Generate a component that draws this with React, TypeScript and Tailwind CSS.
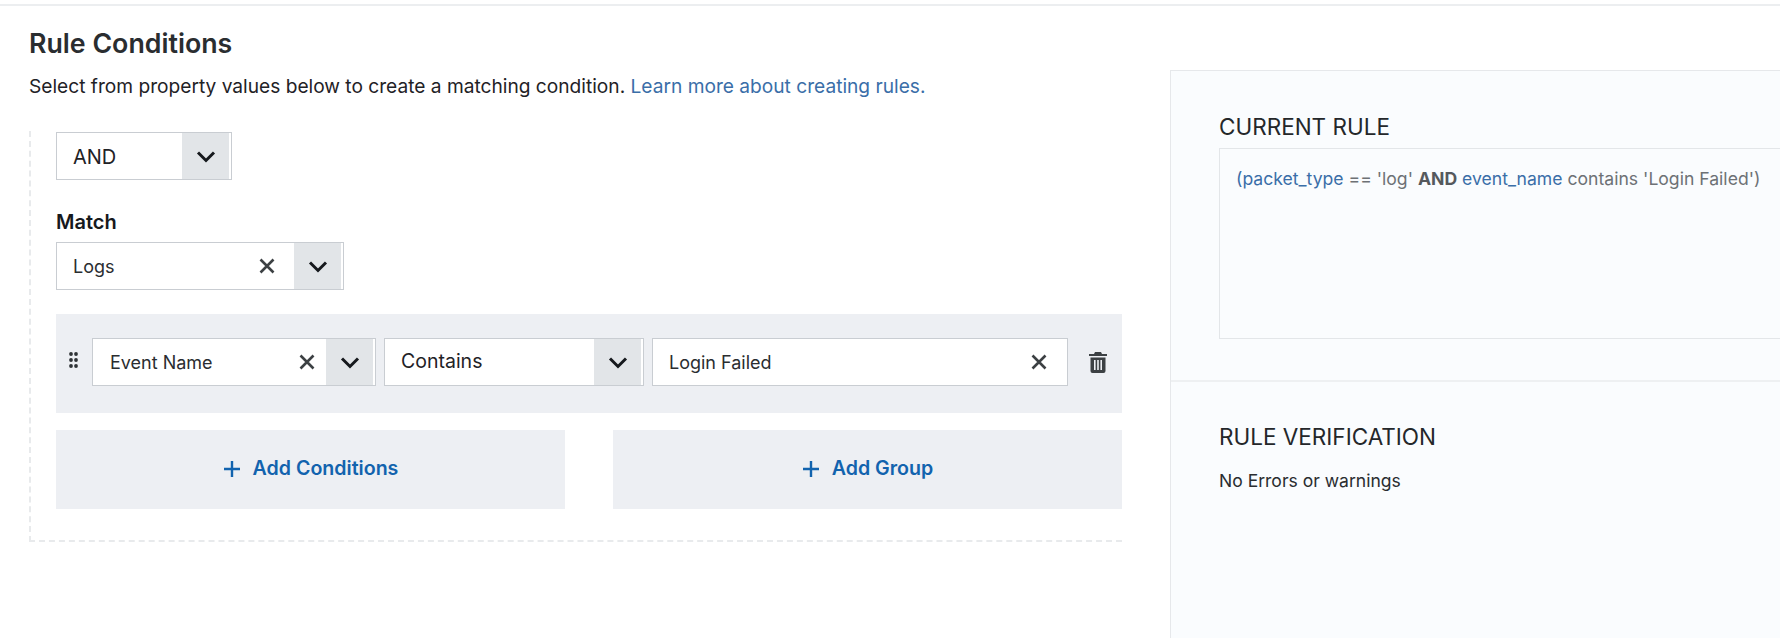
import React from "react";

const Chevron = () => (
  <svg width="20" height="13" viewBox="0 0 20 13" fill="none" aria-hidden="true">
    <path d="M2 2.5 L10 10.5 L18 2.5" stroke="#16191d" strokeWidth="3" />
  </svg>
);

const Cross = () => (
  <svg width="16" height="16" viewBox="0 0 16 16" fill="none" aria-hidden="true">
    <path d="M1.5 1.5 L14.5 14.5 M14.5 1.5 L1.5 14.5" stroke="#3c4043" strokeWidth="2.6" />
  </svg>
);

const Plus = () => (
  <svg width="18" height="18" viewBox="0 0 18 18" fill="none" aria-hidden="true">
    <path d="M9 1 V17 M1 9 H17" stroke="#1263ae" strokeWidth="2.4" />
  </svg>
);

const Trash = () => (
  <svg width="18" height="21" viewBox="0 0 18 21" aria-hidden="true">
    <path
      fill="#3c4043"
      fillRule="evenodd"
      d="M6 0 H12 L13 2 H18 V4 H0 V2 H5 Z M1.5 5.5 H16.5 V19 Q16.5 21 14.5 21 H3.5 Q1.5 21 1.5 19 Z M5 8 V18 H6.6 V8 Z M8.2 8 V18 H9.8 V8 Z M11.4 8 V18 H13 V8 Z"
    />
  </svg>
);

const Dots = () => (
  <svg width="9" height="16" viewBox="0 0 9 16" fill="#2f3336" aria-hidden="true">
    <circle cx="2" cy="2" r="1.9" />
    <circle cx="7" cy="2" r="1.9" />
    <circle cx="2" cy="8" r="1.9" />
    <circle cx="7" cy="8" r="1.9" />
    <circle cx="2" cy="14" r="1.9" />
    <circle cx="7" cy="14" r="1.9" />
  </svg>
);

function Select({
  value,
  width,
  clear,
  clearClass = "w-[34px]",
  chevron = true,
  textClass,
}: {
  value: string;
  width: string;
  clear?: boolean;
  clearClass?: string;
  chevron?: boolean;
  textClass: string;
}) {
  return (
    <div className={`flex h-12 items-stretch border border-[#c9cdd2] bg-white ${width}`}>
      <span className={`flex-1 self-center ${textClass}`}>{value}</span>
      {clear && (
        <span className={`flex items-center justify-start ${clearClass}`}>
          <Cross />
        </span>
      )}
      {chevron && (
        <span className="mr-[2px] flex w-[47px] items-center justify-center bg-[#e2e5e8]">
          <Chevron />
        </span>
      )}
    </div>
  );
}

function AddButton({ label, width }: { label: string; width: string }) {
  return (
    <div className={`flex h-[79px] items-center justify-center gap-[12px] bg-[#edeff3] pb-px ${width}`}>
      <Plus />
      <span className="text-[19.6px] font-semibold text-[#1263ae]">{label}</span>
    </div>
  );
}

export default function App() {
  return (
    <div className="h-[638px] w-full overflow-hidden bg-white font-['Inter','Liberation_Sans',sans-serif] text-[#1f2226]">
      <div className="h-[6px] border-b-2 border-[#eceef0]" />
      <div className="flex h-[632px]">
        <div className="w-[1170px] shrink-0 pl-[29px]">
          <h1 className="mt-[20px] text-[26.75px] leading-[34px] font-semibold text-[#2a2d30]">Rule Conditions</h1>
          <p className="mt-[14px] text-[19.15px] leading-[24px] text-[#1f2226]">
            Select from property values below to create a matching condition.{" "}
            <span className="text-[#3a6ea8]">Learn more about creating rules.</span>
          </p>
          <div className="mt-[33px] h-[411px] w-[1093px] border-b-2 border-l-2 border-dashed border-[#e8eaec] pl-[25px] pt-px">
            <Select value="AND" width="w-[176px]" textClass="pl-[16px] pt-px text-[20px] text-[#1f2226]" />
            <div className="mt-[28px] text-[20px] leading-[28px] font-semibold text-[#16191d]">Match</div>
            <div className="mt-[6px]">
              <Select value="Logs" width="w-[288px]" clear clearClass="w-[35px]" textClass="pl-[16px] pt-px text-[18px] text-[#2a2d30]" />
            </div>
            <div className="mt-[24px] flex h-[99px] w-[1066px] items-center bg-[#edeff3] pb-[3px] pl-[13px]">
              <span className="flex w-[23px] justify-start pb-[4px]">
                <Dots />
              </span>
              <div className="flex gap-[8px]">
                <Select value="Event Name" width="w-[284px]" clear clearClass="w-[27px]" textClass="pl-[17px] text-[18px] text-[#2a2d30]" />
                <Select value="Contains" width="w-[260px]" textClass="pl-[16px] text-[19.5px] text-[#1f2226]" />
                <Select value="Login Failed" width="w-[416px]" clear clearClass="w-[36px]" chevron={false} textClass="pl-[16px] text-[18px] text-[#2a2d30]" />
              </div>
              <span className="ml-[21px]">
                <Trash />
              </span>
            </div>
            <div className="mt-[17px] flex w-[1066px] justify-between">
              <AddButton label="Add Conditions" width="w-[509px]" />
              <AddButton label="Add Group" width="w-[509px]" />
            </div>
          </div>
        </div>
        <div className="mt-[64px] flex flex-1 flex-col border-t border-l border-[#e6e8eb] bg-[#fafcfe]">
          <div className="h-[311px] border-b-2 border-[#eef0f2] pl-[48px]">
            <h2 className="mt-[41px] text-[22.5px] leading-[30px] text-[#24272a]">CURRENT RULE</h2>
            <div className="mt-[6px] h-[191px] border-y border-l border-[#e3e6e9] pl-[16px] pt-[18px] text-[17.6px] leading-[24px] whitespace-nowrap text-[#6d7175]">
              <span className="text-[#3a6ea8]">(packet_type</span> == 'log'{" "}
              <span className="font-bold text-[#55595d]">AND</span>{" "}
              <span className="text-[#3a6ea8]">event_name</span> contains 'Login Failed')
            </div>
          </div>
          <div className="pl-[48px]">
            <h2 className="mt-[40px] text-[22.5px] leading-[30px] text-[#24272a]">RULE VERIFICATION</h2>
            <p className="mt-[17px] text-[17.55px] leading-[24px] text-[#2a2d30]">No Errors or warnings</p>
          </div>
        </div>
      </div>
    </div>
  );
}
